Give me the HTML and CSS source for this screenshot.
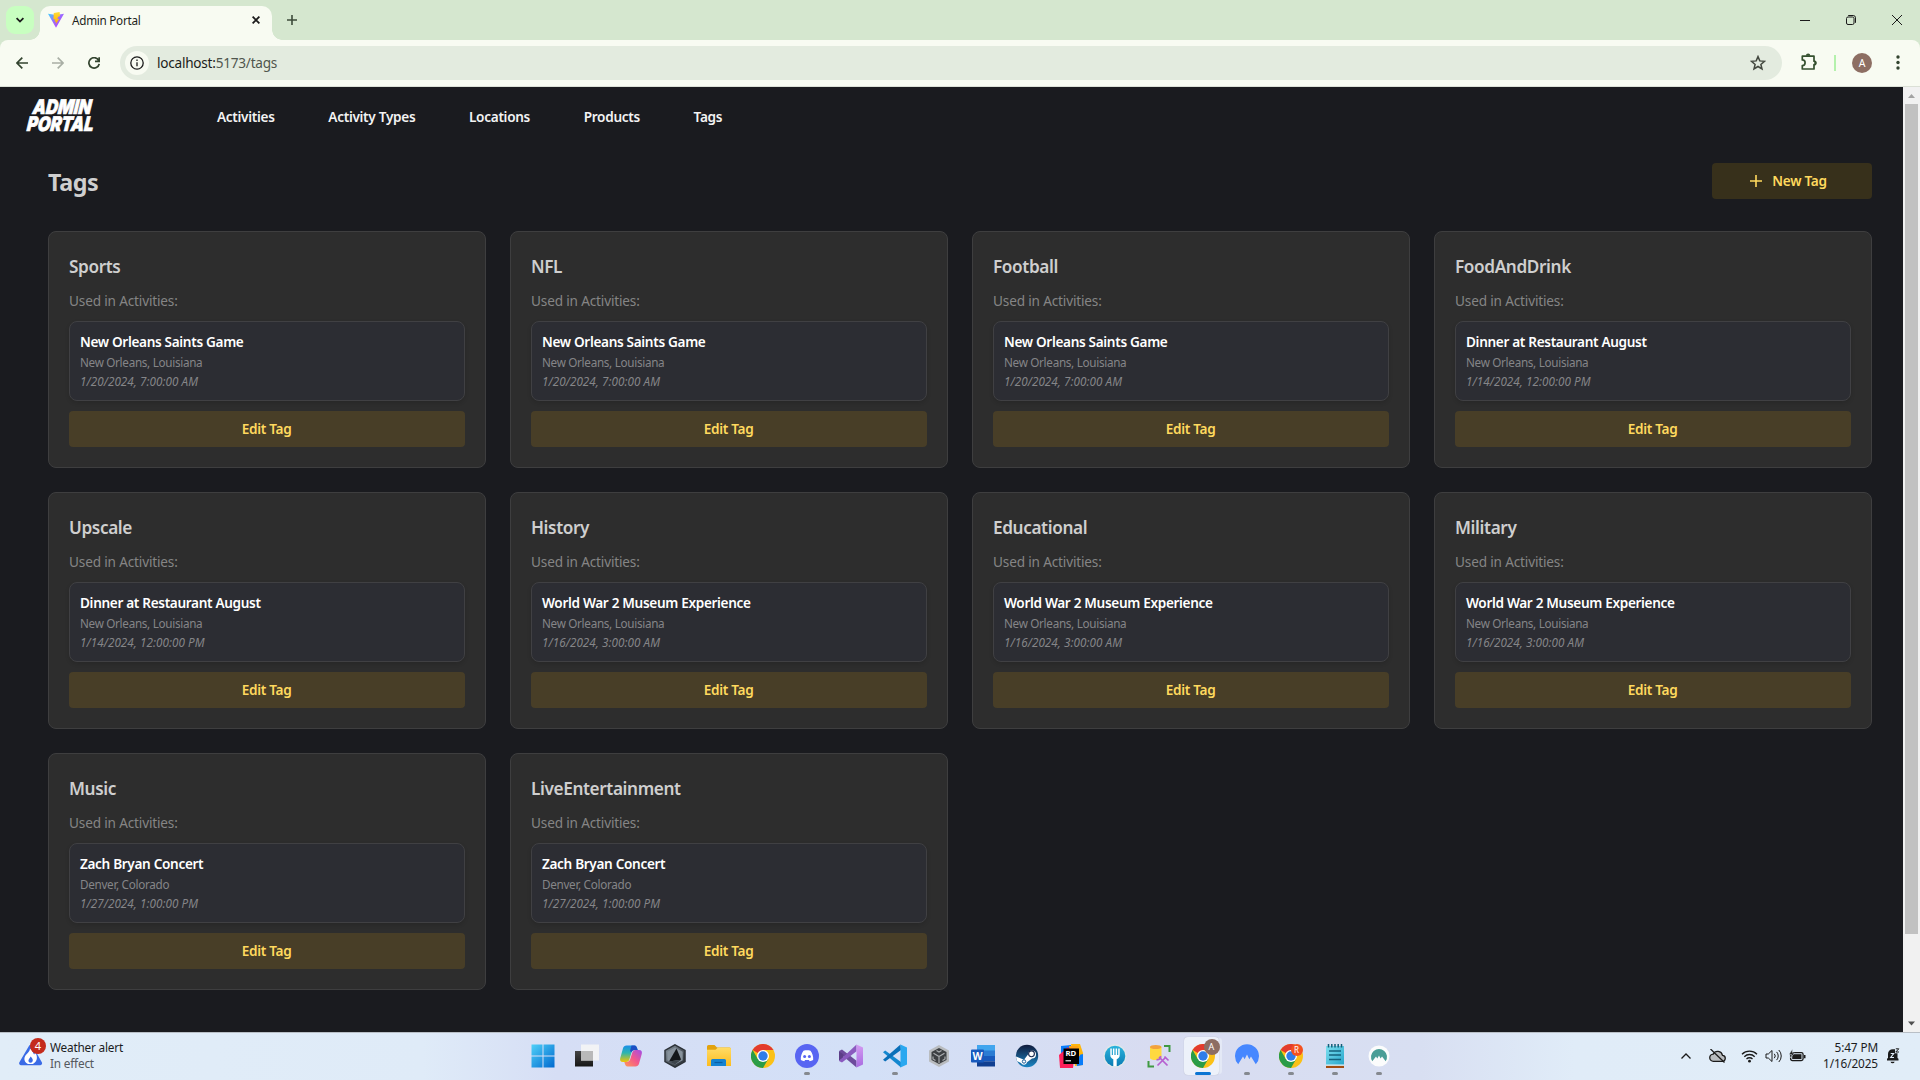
FILE: index.html
```html
<!DOCTYPE html>
<html lang="en">
<head>
<meta charset="utf-8">
<title>Admin Portal</title>
<link rel="stylesheet" href="styles.css">
</head>
<body>
<svg class="defs" aria-hidden="true">
  <defs>
    <linearGradient id="vite-body" x1="0" y1="0" x2="1" y2="1"><stop offset="0" stop-color="#41d1ff"/><stop offset=".45" stop-color="#9a6bff"/><stop offset="1" stop-color="#bd34fe"/></linearGradient>
    <linearGradient id="vite-bolt" x1="0" y1="0" x2="0" y2="1"><stop offset="0" stop-color="#ffdd35"/><stop offset="1" stop-color="#ffa800"/></linearGradient>
    <linearGradient id="win" x1="0" y1="0" x2="1" y2="1"><stop offset="0" stop-color="#4fd0f8"/><stop offset="1" stop-color="#0069cf"/></linearGradient>
    <linearGradient id="dark" x1="0" y1="0" x2="0" y2="1"><stop offset="0" stop-color="#444"/><stop offset="1" stop-color="#161616"/></linearGradient>
    <linearGradient id="cop-a" x1="0" y1="0" x2="0" y2="1"><stop offset="0" stop-color="#1b8fe8"/><stop offset=".45" stop-color="#2bb5b0"/><stop offset="1" stop-color="#f2c500"/></linearGradient>
    <linearGradient id="cop-b" x1="1" y1="0" x2="0" y2="1"><stop offset="0" stop-color="#a04de8"/><stop offset=".5" stop-color="#f4588b"/><stop offset="1" stop-color="#ff9b55"/></linearGradient>
    <linearGradient id="hex" x1="0" y1="0" x2="1" y2="1"><stop offset="0" stop-color="#8c98a3"/><stop offset="1" stop-color="#20252b"/></linearGradient>
    <linearGradient id="fold" x1="0" y1="0" x2="0" y2="1"><stop offset="0" stop-color="#ffdc67"/><stop offset="1" stop-color="#fdbc1e"/></linearGradient>
    <linearGradient id="vs" x1="0" y1="0" x2="0" y2="1"><stop offset="0" stop-color="#d49bf2"/><stop offset="1" stop-color="#a86be0"/></linearGradient>
    <linearGradient id="steam" x1="0" y1="0" x2="0" y2="1"><stop offset="0" stop-color="#101b3c"/><stop offset="1" stop-color="#1b86c4"/></linearGradient>
    <linearGradient id="note" x1="0" y1="0" x2="1" y2="1"><stop offset="0" stop-color="#7fe0f0"/><stop offset="1" stop-color="#25a5cb"/></linearGradient>
    <linearGradient id="fork" x1="0" y1="0" x2="0" y2="1"><stop offset="0" stop-color="#2bb4dc"/><stop offset="1" stop-color="#0a7cb4"/></linearGradient>
    <symbol id="chrome" viewBox="0 0 24 24">
      <circle cx="12" cy="12" r="12" fill="#fbc116"/>
      <path d="M12 12 1.600 6A12 12 0 0 1 22.400 6H12z" fill="#e33b2e"/>
      <path d="M1.600 6A12 12 0 0 0 12 24l5.200-9L12 12 6.800 15z" fill="#2a9c47"/>
      <circle cx="12" cy="12" r="6" fill="#fff"/>
      <circle cx="12" cy="12" r="4.700" fill="#2f7de9"/>
    </symbol>
  </defs>
</svg>

<header class="browser">
  <div class="tabstrip">
    <button class="tab-search" aria-label="Search tabs"><svg width="10" height="10" viewBox="0 0 10 10"><path d="M1.600 3.200 5 6.600l3.400-3.400" class="stroke bold"/></svg></button>
    <div class="tab">
      <svg width="16" height="16" viewBox="0 0 16 16"><path d="M0 1.700 8 15.800 16 1.700 8.300 3z" fill="url(#vite-body)"/><path d="M11.600 0 5.800 1.100 5.400 7.600l1.800-.3L6.700 10l1.500-.4-.7 3.200 3.800-6.100-1.900.4.8-2.400 1.800-.4z" fill="url(#vite-bolt)"/></svg>
      <span class="tab-title">Admin Portal</span>
      <svg class="tab-close" width="8" height="8" viewBox="0 0 8 8"><path d="m.6.6 6.800 6.800M7.400.6.6 7.400" class="stroke bold"/></svg>
    </div>
    <svg class="tab-new" width="10" height="10" viewBox="0 0 10 10"><path d="M5 0v10M0 5h10" stroke="#3c4b3a" stroke-width="1.600"/></svg>
    <div class="window-buttons">
      <svg width="10" height="10" viewBox="0 0 10 10"><path d="M0 5.500h10" class="stroke thin"/></svg>
      <svg width="10" height="10" viewBox="0 0 10 10"><rect x=".5" y="2" width="7.500" height="7.500" rx="1.500" class="stroke thin"/><path d="M2.200.5h5a2.300 2.300 0 0 1 2.300 2.300v5" class="stroke thin"/></svg>
      <svg width="10" height="10" viewBox="0 0 10 10"><path d="m0 0 10 10M10 0 0 10" class="stroke thin"/></svg>
    </div>
  </div>
  <div class="toolbar">
    <svg class="tool" width="12" height="12" viewBox="0 0 12 12"><path d="M12 6H1M6.300.6.9 6l5.400 5.400"/></svg>
    <svg class="tool off" width="12" height="12" viewBox="0 0 12 12"><path d="M0 6h11M5.700.6 11.100 6l-5.400 5.400"/></svg>
    <svg class="tool" width="12" height="12" viewBox="0 0 12 12"><path d="M10.600 3.300A5.200 5.200 0 1 0 11.200 6.800M11.200.2v4.200H7"/></svg>
    <div class="omnibox">
      <span class="site-info"><svg width="14" height="14" viewBox="0 0 14 14"><circle cx="7" cy="7" r="6.200" class="stroke"/><path d="M7 6.200v4M7 3.600v1.500" class="stroke"/></svg></span>
      <span class="url">localhost:<span>5173/tags</span></span>
      <svg class="star" width="16" height="16" viewBox="0 0 16 16"><path d="m8 1.600 1.800 4.300 4.700.4-3.600 3.100 1.100 4.600L8 11.500 4 14l1.100-4.600-3.600-3.100 4.700-.4z"/></svg>
    </div>
    <svg class="puzzle" width="18" height="18" viewBox="0 0 18 18"><path d="M2.300 3.200H14V8.200a1.700 1.700 0 0 1 0 3.400V16H2.300V12.500a2.800 2.800 0 0 0 0-5.600z" fill="none" stroke="#35502f" stroke-width="1.700" stroke-linejoin="round"/><path d="M5.900 2.800a2.200 2.200 0 0 1 4.400 0zM14.400 7.800a2.200 2.200 0 0 1 0 4.400z" fill="#35502f"/></svg>
    <i class="separator"></i>
    <span class="avatar">A</span>
    <svg class="menu" width="4" height="15" viewBox="0 0 4 15"><circle cx="2" cy="2" r="1.700"/><circle cx="2" cy="7.500" r="1.700"/><circle cx="2" cy="13" r="1.700"/></svg>
  </div>
</header>

<div class="viewport">
  <div class="page">
    <nav class="nav">
      <div class="logo"><span class="logo-top">ADMIN</span><span class="logo-bottom">PORTAL</span></div>
      <a>Activities</a><a>Activity Types</a><a>Locations</a><a>Products</a><a>Tags</a>
    </nav>
    <main>
      <div class="heading">
        <h1>Tags</h1>
        <button class="btn btn-new"><svg width="12" height="12" viewBox="0 0 12 12"><path d="M6 0v12M0 6h12" stroke="#ffd95e" stroke-width="1.600"/></svg>New Tag</button>
      </div>
      <div class="cards">
        <section class="card"><h2>Sports</h2><p class="used">Used in Activities:</p><div class="activity"><b>New Orleans Saints Game</b><span>New Orleans, Louisiana</span><em>1/20/2024, 7:00:00 AM</em></div><button class="btn">Edit Tag</button></section>
        <section class="card"><h2>NFL</h2><p class="used">Used in Activities:</p><div class="activity"><b>New Orleans Saints Game</b><span>New Orleans, Louisiana</span><em>1/20/2024, 7:00:00 AM</em></div><button class="btn">Edit Tag</button></section>
        <section class="card"><h2>Football</h2><p class="used">Used in Activities:</p><div class="activity"><b>New Orleans Saints Game</b><span>New Orleans, Louisiana</span><em>1/20/2024, 7:00:00 AM</em></div><button class="btn">Edit Tag</button></section>
        <section class="card"><h2>FoodAndDrink</h2><p class="used">Used in Activities:</p><div class="activity"><b>Dinner at Restaurant August</b><span>New Orleans, Louisiana</span><em>1/14/2024, 12:00:00 PM</em></div><button class="btn">Edit Tag</button></section>
        <section class="card"><h2>Upscale</h2><p class="used">Used in Activities:</p><div class="activity"><b>Dinner at Restaurant August</b><span>New Orleans, Louisiana</span><em>1/14/2024, 12:00:00 PM</em></div><button class="btn">Edit Tag</button></section>
        <section class="card"><h2>History</h2><p class="used">Used in Activities:</p><div class="activity"><b>World War 2 Museum Experience</b><span>New Orleans, Louisiana</span><em>1/16/2024, 3:00:00 AM</em></div><button class="btn">Edit Tag</button></section>
        <section class="card"><h2>Educational</h2><p class="used">Used in Activities:</p><div class="activity"><b>World War 2 Museum Experience</b><span>New Orleans, Louisiana</span><em>1/16/2024, 3:00:00 AM</em></div><button class="btn">Edit Tag</button></section>
        <section class="card"><h2>Military</h2><p class="used">Used in Activities:</p><div class="activity"><b>World War 2 Museum Experience</b><span>New Orleans, Louisiana</span><em>1/16/2024, 3:00:00 AM</em></div><button class="btn">Edit Tag</button></section>
        <section class="card"><h2>Music</h2><p class="used">Used in Activities:</p><div class="activity"><b>Zach Bryan Concert</b><span>Denver, Colorado</span><em>1/27/2024, 1:00:00 PM</em></div><button class="btn">Edit Tag</button></section>
        <section class="card"><h2>LiveEntertainment</h2><p class="used">Used in Activities:</p><div class="activity"><b>Zach Bryan Concert</b><span>Denver, Colorado</span><em>1/27/2024, 1:00:00 PM</em></div><button class="btn">Edit Tag</button></section>
      </div>
    </main>
  </div>
  <div class="scrollbar">
    <svg width="17" height="17" viewBox="0 0 17 17"><path d="M5 11h7L8.500 7z" fill="#a3a3a3"/></svg>
    <i class="thumb"></i>
    <svg width="17" height="17" viewBox="0 0 17 17"><path d="M5 6.500h7l-3.500 4z" fill="#505050"/></svg>
  </div>
</div>

<footer class="taskbar">
  <div class="weather">
    <svg width="28" height="30" viewBox="0 0 28 30"><path d="M11.200 8.500 1.400 25.300a2 2 0 0 0 1.700 3h19a2 2 0 0 0 1.700-3L14.400 8.500a2 2 0 0 0-3.200 0z" fill="#3a6be6"/><path d="M12 11.500c3.800 2.500 2.500 4.700 4.300 5.900.7-.8.700-1.600.5-2.300 3 3.800 3.200 9.300-1.900 11.800H10c-5.200-2.500-4-7.700-1.200-10 1.700-1.600 3-2.700 3.200-5.400z" fill="#fff"/><path d="M12.700 19.500c1.900 1.900 2.700 3.600 1.700 5.300-.8 1.200-2.900 1.200-3.700 0-.9-1.600.7-3.300 2-5.300z" fill="#3a6be6"/></svg>
    <span class="badge">4</span>
    <div class="weather-text"><span>Weather alert</span><span class="dim">In effect</span></div>
  </div>
  <div class="apps">
    <span class="app"><svg width="24" height="24" viewBox="0 0 24 24"><path d="M.5.500h11v11H.5zM12.500.500h11v11h-11zM.5 12.500h11v11H.5zM12.500 12.500h11v11h-11z" fill="url(#win)"/></svg></span>
    <span class="app"><svg width="24" height="24" viewBox="0 0 24 24"><path d="M0 7h18v15.500H0z" fill="url(#dark)"/><path d="M6 .5h18v16H6z" fill="#f4f4f4" opacity=".92"/><path d="M6 7h12v9.500H6z" fill="#b9b9b9"/></svg></span>
    <span class="app"><svg width="24" height="24" viewBox="0 0 24 24"><path d="M7.500 1.500h8c1.600 0 2.300 1.500 2.700 3l.5 1.500h-3c-1.500 0-2.700 1-3.200 2.600L10.500 15c-.5 1.700-1.500 3-3.500 3H4c-2.500 0-3.300-1.700-2.800-3.800L4 4.200C4.600 2.300 5.700 1.500 7.500 1.500z" fill="url(#cop-a)"/><path d="M12.500 1.500h3c1.600 0 2.300 1.500 2.700 3l.5 1.500h-3c-1.500 0-2.600.8-3.200 2.200L11 7z" fill="#1c4fc4"/><path d="M16.500 22.500h-8c-1.600 0-2.300-1.500-2.700-3L5.300 18H7.500c1.700 0 3.200-1 3.800-2.900l1.900-6.300c.5-1.700 1.500-2.800 3.300-2.800H20c2.500 0 3.300 1.700 2.800 3.800L20 19.800c-.6 1.900-1.700 2.700-3.500 2.700z" fill="url(#cop-b)"/></svg></span>
    <span class="app"><svg width="24" height="24" viewBox="0 0 24 24"><path d="M12 .8 22 6.400v11.200L12 23.200 2 17.600V6.400z" fill="url(#hex)" stroke="#2c3238" stroke-width="1.500"/><path d="M12 3.500 4.300 7.800v8.400l7.700 4.300 7.700-4.300V7.800z" fill="#87929c"/><path d="m13.500 4.500 4.700 11.200L6 17.500z" fill="#14171a"/><path d="m6 17.500 12.200-1.800L12 20.500z" fill="#3d454c"/></svg></span>
    <span class="app"><svg width="24" height="24" viewBox="0 0 24 24"><path d="M0 2.500A1.500 1.500 0 0 1 1.500 1h6L10 3.500h12.500A1.500 1.500 0 0 1 24 5v6H0z" fill="#e2a20d"/><path d="M0 5.800h8.500L11 3.500h11.500A1.500 1.500 0 0 1 24 5v17H0z" fill="url(#fold)"/><path d="M4 22v-5.500a1.500 1.500 0 0 1 1.500-1.500h12a1.500 1.500 0 0 1 1.500 1.500V22z" fill="#1583d2"/><path d="M7.500 18.500h8" stroke="#0b5ea3" stroke-width="1.200"/></svg></span>
    <span class="app"><svg width="24" height="24"><use href="#chrome"/></svg></span>
    <span class="app open"><svg width="24" height="24" viewBox="0 0 24 24"><circle cx="12" cy="12" r="12" fill="#5865f2"/><path d="M8.500 6.800c2.300-.6 4.700-.6 7 0 1.900 2.600 2.900 5.600 2.700 9-1.300 1-2.500 1.300-3.500 1.500l-.8-1.400h-3.800l-.8 1.400c-1-.2-2.200-.5-3.500-1.500-.2-3.400.8-6.400 2.700-9z" fill="#fff"/><circle cx="9.600" cy="12.400" r="1.500" fill="#5865f2"/><circle cx="14.400" cy="12.400" r="1.500" fill="#5865f2"/></svg></span>
    <span class="app"><svg width="24" height="24" viewBox="0 0 24 24"><path d="M0 6.500 3 5l14 12v6.500L3 19 0 17.500z" fill="none"/><path d="M0 7 3 5.500l14.500 11.300v6.700L4.500 12.500z" fill="#6d4b9c"/><path d="M0 7l4.500 3.500v3L0 17z" fill="#5c3d88"/><path d="M17.500.5 0 17l3 1.500L17.500 7.200z" fill="#8a5abf"/><path d="M17.500.5 24 3.500v17l-6.500 3z" fill="url(#vs)"/></svg></span>
    <span class="app open"><svg width="24" height="24" viewBox="0 0 24 24"><path d="M0 8.200 2.200 6.500 18 18v5.500z" fill="#1487cf"/><path d="M17.500.5 0 15.800l2.200 1.700L18 6z" fill="#0a6fb8"/><path d="M17.500.5 24 3.500v17l-6.500 3z" fill="#2aa8f0"/></svg></span>
    <span class="app"><svg width="24" height="24" viewBox="0 0 24 24"><path d="m12 1 10 5.500v11L12 23 2 17.500v-11z" fill="#b9bcbf"/><path d="m12 4 7.500 4v8L12 20l-7.500-4V8z" fill="#3d4043"/><path d="M12 12.500V19M12 12.500 6.500 9.200M12 12.500l5.500-3.300M9.500 6.500 12 8l2.500-1.500M6 12.500V15l2.500 1.500M18 12.500V15l-2.500 1.500" stroke="#a9acaf" stroke-width="1.200" fill="none"/></svg></span>
    <span class="app"><svg width="24" height="24" viewBox="0 0 24 24"><path d="M6 1h18v6H6z" fill="#41a5ee"/><path d="M6 6.500h18V12H6z" fill="#2b7cd3"/><path d="M6 12h18v5.300H6z" fill="#185abd"/><path d="M6 17.300h18V22.500H6z" fill="#103f91"/><rect y="5.500" width="13" height="13" rx="1" fill="#185abd"/><text x="6.500" y="15.600" class="glyph" font-size="10.500">W</text></svg></span>
    <span class="app"><svg width="24" height="24" viewBox="0 0 24 24"><circle cx="12" cy="12" r="11.200" fill="url(#steam)"/><path d="m1 12.500 8 3.300 4-5.300a4 4 0 1 1 4 4L12 18.200A3.200 3.200 0 0 1 6 19L1.800 17z" fill="#fff"/><circle cx="16.500" cy="9.800" r="2.900" fill="#fff" stroke="#17294f" stroke-width="1.100"/><circle cx="9" cy="17.500" r="1.700" fill="none" stroke="#1a5c95"/></svg></span>
    <span class="app"><svg width="24" height="24" viewBox="0 0 24 24"><path d="m2 2 10-1v10L2 9z" fill="#087cfa"/><path d="M12 0h9l3 9v12l-8 1z" fill="#fdb60d"/><path d="m16 12 8-2v11l-6 1z" fill="#087cfa"/><path d="M0 11 9 3l6 13-1 8H1z" fill="#ff1f5b"/><path d="M10 2h9l2 10-9 3z" fill="#ffa012"/><path d="M4.500 4.500H20V20H4.500z" fill="#000"/><text x="11.900" y="12.300" class="glyph" font-size="7.800">RD</text><path d="M6.500 16.800H12" stroke="#fff" stroke-width="1.100"/></svg></span>
    <span class="app"><svg width="24" height="24" viewBox="0 0 24 24"><circle cx="12" cy="12" r="11.700" fill="#dfe6ea"/><circle cx="12" cy="12" r="10.300" fill="url(#fork)"/><path d="M7.300 4.500V11a4.500 4.500 0 0 0 3 4.200V22.500h3.400v-7.300A4.500 4.500 0 0 0 16.700 11V4.500h-1.500V11h-1.100V4.500h-1.500V11h-1.200V4.500H9.900V11H8.800V4.500z" fill="#fff"/></svg></span>
    <span class="app"><svg width="24" height="24" viewBox="0 0 24 24"><path d="M3 3h11.500v11a5.700 2 0 0 1-11.500 0z" fill="#ffd93f"/><ellipse cx="8.700" cy="3" rx="5.800" ry="2" fill="#f2a23c"/><path d="M17 2h5.500v6M1.500 17v5.500H7" fill="none" stroke="#3f9a42" stroke-width="2"/><path d="m10.500 21.500 8-8M12 13l8.500 8.500" stroke="#b65fd0" stroke-width="1.700"/><path d="M9.500 15.500a3 3 0 0 0 4-3.500M17.500 12.500l4 4" stroke="#b65fd0" stroke-width="1.700" fill="none"/></svg></span>
    <span class="app active"><svg width="24" height="24"><use href="#chrome"/></svg><i class="profile brown">A</i></span>
    <span class="app open"><svg width="24" height="24" viewBox="0 0 24 24"><path d="M3.200 20.300A12 12 0 1 1 20.800 20.300L16 12.500l-1.700 2.800L12 10.500 9.600 15.300 8 12.500z" fill="#4687ff"/></svg></span>
    <span class="app open"><svg width="24" height="24"><use href="#chrome"/></svg><i class="profile orange">R</i></span>
    <span class="app open"><svg width="24" height="24" viewBox="0 0 24 24"><path d="M3 21h18v3H3z" fill="#a34d12"/><path d="M3 2h18v19.500H3z" fill="url(#note)"/><path d="M3 20.500h18v1.300H3z" fill="#e8f4f8"/><path d="M5.500 0v3.500M8.800 0v3.500M12 0v3.500M15.200 0v3.500M18.500 0v3.500" stroke="#155e78" stroke-width="1.500"/><path d="M6 7h12M6 11h12M6 15.500h12" stroke="#14627e" stroke-width="1.400"/></svg></span>
    <span class="app open"><svg width="24" height="24" viewBox="0 0 24 24"><circle cx="12" cy="12" r="10.500" fill="#fbfcfc"/><path d="M5.300 17.300a8 8 0 1 1 13.400 0L15 12.600l-1.400 1.900L12 11.500l-1.700 3L9 12.600z" fill="#4a9e97"/></svg></span>
  </div>
  <div class="tray">
    <svg width="10" height="6" viewBox="0 0 10 6"><path d="m.5 5.500 4.500-4.500 4.500 4.500" class="stroke"/></svg>
    <svg class="cloud" width="17" height="14" viewBox="0 0 17 14"><path d="M4.500 12.300a3.600 3.600 0 0 1-.3-7.200 5 5 0 0 1 9.300 1.200 3 3 0 0 1-.5 6z" fill="#b9bcbf" stroke="#1b1b1b" stroke-width="1.300"/><path d="m1.500 0 14 13.500" stroke="#1b1b1b" stroke-width="1.300"/></svg>
    <svg class="wifi" width="17" height="14" viewBox="0 0 17 14"><path d="M1 5.300a10.600 10.600 0 0 1 15 0M3.300 7.700a7.300 7.300 0 0 1 10.400 0M5.500 10a4.200 4.200 0 0 1 6 0" class="stroke"/><circle cx="8.500" cy="12.200" r="1.400"/></svg>
    <svg class="volume" width="17" height="14" viewBox="0 0 17 14"><path d="M1 5v4h2.300l3.700 3.500v-11L3.300 5zM9.300 4.800a3.300 3.300 0 0 1 0 4.400M11.600 2.900a6 6 0 0 1 0 8.200M13.800 1a8.600 8.600 0 0 1 0 12" class="stroke thin"/></svg>
    <svg class="battery" width="17" height="14" viewBox="0 0 17 14"><rect x="1.600" y="3.600" width="12.500" height="8" rx="1.800" class="stroke"/><path d="M3.200 5.200h9.300v4.900H3.200z"/><path d="M15 6h1.500v3.200H15z"/><path d="M3.500 0 0 5.500h2.500L1.500 9l4-5H3.300z" stroke="#e0ecf8" stroke-width=".5"/></svg>
    <div class="clock"><span>5:47 PM</span><span>1/16/2025</span></div>
    <svg class="bell" width="14" height="16" viewBox="0 0 14 16"><path d="M1 12.500V10.800L2 10V6a4.800 4.800 0 0 1 4.800-4.800H9v4h2.500V10l1 .8v1.700zM4.500 13.700h4.200a2.200 2.200 0 0 1-4.200 0z"/><path d="M4.700 5.500h3L4.700 9.500h3.300" stroke="#e0ecf8" stroke-width="1.100" fill="none"/><path d="M9.800.8h3l-3 3.200h3.200" class="stroke thin"/></svg>
  </div>
</footer>
</body>
</html>
```
FILE: styles.css
```css
* { box-sizing: border-box; margin: 0; padding: 0; }

body {
  display: flex;
  flex-direction: column;
  width: 1920px;
  height: 1080px;
  overflow: hidden;
  font-family: "Noto Sans", "Open Sans", sans-serif;
  background: #1a1b1f;
}

svg { display: block; flex: none; }
.defs { position: absolute; width: 0; height: 0; }
button { border: 0; font-family: inherit; }

.stroke { fill: none; stroke: #1b1b1b; stroke-width: 1.3; }
.stroke.bold { stroke-width: 1.8; }
.stroke.thin { stroke-width: 1; }

/* Browser frame */
.browser { flex: none; height: 87px; background: #d5e7cf; }

.tabstrip { display: flex; height: 40px; padding-left: 6px; }

.tab-search {
  display: flex;
  align-items: center;
  justify-content: center;
  width: 28px;
  height: 28px;
  margin: 6px 6px 0 0;
  border-radius: 9px;
  background: #c8ffc0;
}

.tab {
  position: relative;
  display: flex;
  align-items: center;
  width: 232px;
  height: 34px;
  margin-top: 6px;
  padding: 0 12px 6px 8px;
  border-radius: 10px 10px 0 0;
  background: #f8fbf2;
}
.tab::before, .tab::after {
  content: "";
  position: absolute;
  bottom: 0;
  width: 10px;
  height: 10px;
}
.tab::before { left: -10px; background: radial-gradient(circle at 0 0, transparent 9.5px, #f8fbf2 10px); }
.tab::after { right: -10px; background: radial-gradient(circle at 100% 0, transparent 9.5px, #f8fbf2 10px); }
.tab-title { flex: 1; margin-left: 8px; font-size: 11.7px; letter-spacing: -.26px; color: #1d1f1c; }
.tab-new { margin: 15px 0 0 15px; }

.window-buttons { display: flex; gap: 36px; margin: 15px 18px 0 auto; }

.toolbar {
  display: flex;
  align-items: center;
  height: 47px;
  padding: 0 20px 1px 16px;
  border-bottom: 1px solid #dbe0d6;
  border-radius: 8px 8px 0 0;
  background: #f8fbf2;
}
.tool { margin-right: 24px; fill: none; stroke: #33442f; stroke-width: 1.7; }
.tool.off { stroke: #a9afa5; }

.omnibox {
  display: flex;
  align-items: center;
  width: 1662px;
  height: 34px;
  margin-left: -4px;
  padding: 0 16px 0 5px;
  border-radius: 17px;
  background: #e3ebdf;
}
.site-info {
  display: flex;
  align-items: center;
  justify-content: center;
  width: 24px;
  height: 24px;
  border-radius: 50%;
  background: #f8fbf2;
}
.url { flex: 1; margin-left: 8px; font-size: 13.6px; letter-spacing: -.24px; color: #1b1c1a; }
.url span { color: #50564d; }
.star { fill: none; stroke: #43483f; stroke-width: 1.5; }
.puzzle { margin: -2px 0 0 18px; }
.separator { width: 2px; height: 16px; margin-left: 16px; background: #b4f1ac; }
.avatar {
  width: 20px;
  height: 20px;
  margin: 0 14px 0 16px;
  border-radius: 50%;
  background: #8d6e63;
  font-size: 10.5px;
  line-height: 20px;
  text-align: center;
  color: #fff;
}
.menu { margin-left: 10px; fill: #33442f; }

/* Page */
.viewport { display: flex; flex: 1; min-height: 0; }
.page { flex: 1; overflow: hidden; background: #1a1b1f; }

.nav {
  display: flex;
  align-items: center;
  gap: 53.7px;
  height: 60px;
  padding: 0 0 2px 27px;
  font-size: 13.6px;
  font-weight: 600;
  letter-spacing: -.3px;
  color: #f3f3f3;
}
.logo {
  display: flex;
  flex-direction: column;
  width: 136.3px;
  font-family: Inter, "Noto Sans", sans-serif;
  font-style: italic;
  font-weight: 900;
  font-size: 20px;
  line-height: 17px;
  letter-spacing: 0;
  color: #fff;
  -webkit-text-stroke: .7px #fff;
  transform: skewX(-6deg);
}
.logo span { transform-origin: 0 50%; }
.logo-top { margin-left: 5px; transform: scaleX(.83); }
.logo-bottom { margin-left: 1px; transform: scaleX(.82); }

main { width: 1920px; padding: 16px 48px 0; }
.heading { display: flex; align-items: center; justify-content: space-between; height: 36px; margin-bottom: 32px; }
h1 { padding-top: 2px; font-size: 23.3px; letter-spacing: -.4px; color: #cfcfcf; }

.btn {
  display: flex;
  align-items: center;
  justify-content: center;
  gap: 10px;
  width: 100%;
  height: 36px;
  padding: 0 1px 2px 0;
  border-radius: 4px;
  background: #483e27;
  font-size: 13.6px;
  font-weight: 600;
  letter-spacing: -.3px;
  color: #ffd95e;
}
.btn-new { width: 160px; padding-right: 7px; background: #37301b; }
.btn-new svg { margin-top: 1px; }

.cards { display: grid; grid-template-columns: repeat(4, 438px); gap: 24px; }
.card {
  height: 237px;
  padding: 20px;
  border: 1px solid #3e3e3f;
  border-radius: 8px;
  background: #2d2d2d;
}
h2 { font-size: 17.2px; line-height: 30px; font-weight: 600; letter-spacing: -.38px; color: #cfcfcf; }
.used { margin: 10px 0 11px; font-size: 13.6px; line-height: 18px; letter-spacing: -.16px; color: #858585; }
.activity {
  display: flex;
  flex-direction: column;
  height: 80px;
  margin-bottom: 10px;
  padding: 10px 10px 0;
  border: 1px solid #404043;
  border-radius: 8px;
  background: #2c2d33;
  box-shadow: 0 2px 4px rgba(0, 0, 0, .12);
  font-size: 11.7px;
  line-height: 19px;
  letter-spacing: -.3px;
  color: #858588;
}
.activity b { margin-bottom: 1px; font-size: 13.6px; line-height: 20px; font-weight: 600; letter-spacing: -.33px; color: #fff; }
.activity em { letter-spacing: .05px; }

.scrollbar { display: flex; flex-direction: column; width: 17px; background: #f1f1f1; }
.thumb { width: 13px; height: 830px; margin: 0 auto auto; background: #c1c1c1; }

/* Taskbar */
.taskbar {
  display: grid;
  grid-template-columns: 520.5px 880px 1fr;
  flex: none;
  height: 48px;
  border-top: 1px solid #b9bfc6;
  background: linear-gradient(90deg, #e1edf8 0, #dfebf8 22%, #d6def5 29%, #d3e0f7 45%, #d8dcf1 60%, #d8dff2 74%, #e0ecf8 82%, #e1edf8 100%);
  color: #1b1c1e;
}
.weather { position: relative; display: flex; padding: 4px 0 0 18px; }
.badge {
  position: absolute;
  left: 30px;
  top: 5px;
  width: 16px;
  height: 16px;
  border-radius: 50%;
  background: #c42b1c;
  font-size: 11px;
  line-height: 16px;
  text-align: center;
  color: #fff;
}
.weather-text { display: flex; flex-direction: column; margin: 2px 0 0 4px; font-size: 11.8px; line-height: 16px; letter-spacing: -.2px; }
.dim { color: #55595e; }

.apps { display: flex; }
.app {
  position: relative;
  display: flex;
  justify-content: center;
  width: 44px;
  height: 47px;
  padding-top: 11px;
}
.app.open::after, .app.active::after {
  content: "";
  position: absolute;
  left: 19px;
  top: 39px;
  width: 6px;
  height: 3px;
  border-radius: 2px;
  background: #85898f;
}
.app.active::before {
  content: "";
  position: absolute;
  left: 3px;
  top: 4px;
  width: 35px;
  height: 38px;
  border-radius: 4px;
  background: #edf1fa;
  box-shadow: 0 0 1px #aab, 4px 0 0 -1px #e4e9f6;
}
.app.active svg { position: relative; }
.app.active::after { left: 14px; width: 16px; background: #0a74d3; }
.profile {
  position: absolute;
  border-radius: 50%;
  font-style: normal;
  text-align: center;
  color: #fff;
}
.brown { left: 23px; top: 6px; width: 16px; height: 16px; background: #8d6e63; font-size: 9px; line-height: 16px; }
.orange { left: 22px; top: 11px; width: 12px; height: 12px; background: #f4511e; font-size: 8px; line-height: 12px; }
.glyph { font-weight: 700; text-anchor: middle; fill: #fff; }

.tray { display: flex; align-items: center; justify-content: flex-end; padding: 0 20px 1px 0; fill: #1b1b1b; }
.cloud { margin-left: 18px; }
.wifi { margin-left: 15px; }
.volume { margin-left: 7px; }
.battery { margin-left: 7px; }
.clock {
  display: flex;
  flex-direction: column;
  width: 72px;
  margin: -2px 8px 0 0;
  font-size: 11.8px;
  line-height: 16px;
  letter-spacing: -.12px;
  text-align: right;
}
```
